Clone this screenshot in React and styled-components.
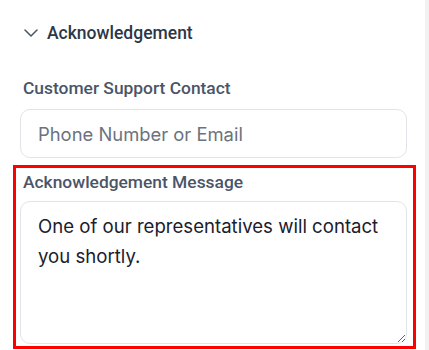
import React from "react";
import styled, { createGlobalStyle } from "styled-components";

const GlobalStyle = createGlobalStyle`
  html, body {
    margin: 0;
    padding: 0;
    background: #ffffff;
  }
  * {
    box-sizing: border-box;
  }
`;

const Panel = styled.div`
  width: 429px;
  height: 350px;
  border-right: 4px solid #f2f2f2;
  padding: 22px 0 0 13px;
  display: flex;
  flex-direction: column;
  font-family: Roboto, "Liberation Sans", sans-serif;
`;

const SectionHeader = styled.div`
  display: flex;
  align-items: center;
  gap: 9px;
  height: 22px;
  padding-left: 11px;
  color: #2d3748;
  font-size: 17.5px;
  font-weight: 500;
`;

const Field = styled.div`
  width: 403px;
  display: flex;
  flex-direction: column;
  gap: ${(p) => p.$gap || 10}px;
  padding: ${(p) => (p.$highlighted ? "4px 6px 2px 4px" : "0 9px 0 7px")};
  border: ${(p) => (p.$highlighted ? "3px solid #ff0000" : "none")};
`;

const Label = styled.label`
  padding-left: 3px;
  font-size: 17.4px;
  font-weight: 500;
  line-height: 20px;
  color: #4a5568;
`;

const Input = styled.input`
  width: 100%;
  height: 49px;
  border: 1px solid #e2e4ea;
  border-radius: 10px;
  padding: 0 17px;
  font-family: Inter, "Noto Sans", sans-serif;
  font-size: 18.4px;
  color: #1a202c;
  outline: none;
  &::placeholder {
    color: #6b7280;
  }
`;

const TextArea = styled.textarea`
  width: 100%;
  height: 143px;
  border: 1px solid #e2e4ea;
  border-radius: 10px;
  padding: 9px 17px;
  font-family: Inter, "Noto Sans", sans-serif;
  font-size: 18.6px;
  line-height: 30px;
  color: #1a202c;
  outline: none;
  resize: vertical;
  display: block;
`;

const Chevron = () => (
  <svg width="14" height="8" viewBox="0 0 14 8" fill="none">
    <path d="M1 1l6 6 6-6" stroke="#4a5568" strokeWidth="1.5" strokeLinecap="round" strokeLinejoin="round" />
  </svg>
);

const App = () => {
  return (
    <>
      <GlobalStyle />
      <Panel>
        <SectionHeader>
          <Chevron />
          Acknowledgement
        </SectionHeader>
        <Field style={{ marginTop: 34 }} $gap={11}>
          <Label>Customer Support Contact</Label>
          <Input placeholder="Phone Number or Email" />
        </Field>
        <Field $highlighted $gap={9} style={{ marginTop: 7 }}>
          <Label>Acknowledgement Message</Label>
          <TextArea defaultValue="One of our representatives will contact you shortly." />
        </Field>
      </Panel>
    </>
  );
};

export default App;
